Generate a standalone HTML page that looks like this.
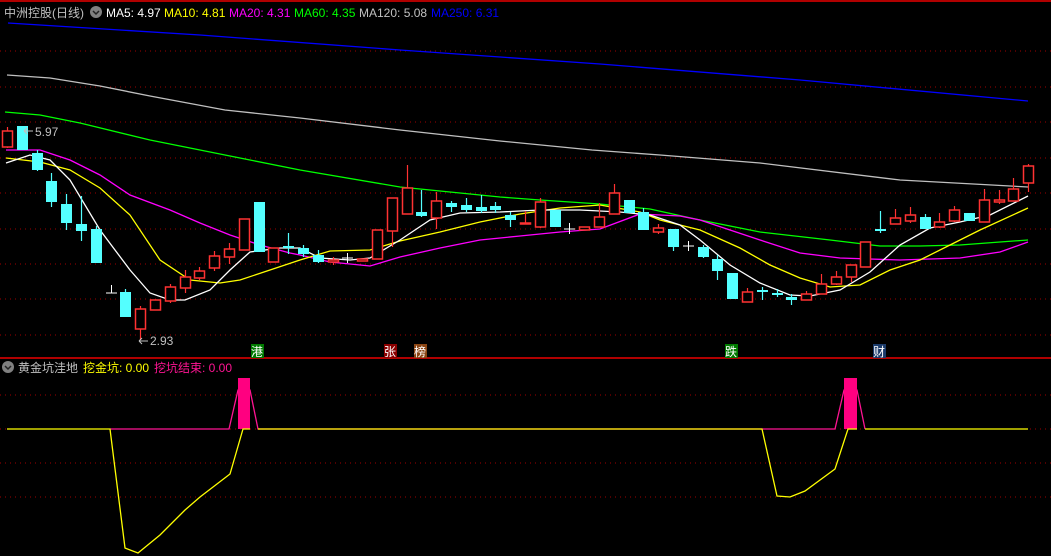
<!DOCTYPE html>
<html><head><meta charset="utf-8"><style>
html,body{margin:0;padding:0;background:#000;width:1051px;height:556px;overflow:hidden}
svg{display:block}
text{font-family:"Liberation Sans","Noto Sans CJK SC",sans-serif;font-size:12px}
.r{stroke:#ff3232;stroke-width:1.2}
.rb{fill:#000;stroke:#ff3232;stroke-width:1.5}
.c{stroke:#54ffff;stroke-width:1.2}
.cb{fill:#54ffff}
.g{stroke:#a00000;stroke-width:1;stroke-dasharray:1 4}
polyline{fill:none;stroke-width:1.3}
</style></head><body>
<svg width="1051" height="556" viewBox="0 0 1051 556">
<line x1="0" y1="1" x2="1051" y2="1" stroke="#b00000" stroke-width="2"/>
<g class="g">
<line x1="0" y1="51" x2="1051" y2="51"/><line x1="0" y1="87" x2="1051" y2="87"/><line x1="0" y1="122" x2="1051" y2="122"/><line x1="0" y1="158" x2="1051" y2="158"/><line x1="0" y1="193" x2="1051" y2="193"/><line x1="0" y1="229" x2="1051" y2="229"/><line x1="0" y1="264" x2="1051" y2="264"/><line x1="0" y1="299" x2="1051" y2="299"/><line x1="0" y1="335" x2="1051" y2="335"/>
<line x1="0" y1="395" x2="1051" y2="395"/><line x1="0" y1="429" x2="1051" y2="429"/><line x1="0" y1="463" x2="1051" y2="463"/><line x1="0" y1="497" x2="1051" y2="497"/>
</g>
<line x1="0" y1="358" x2="1051" y2="358" stroke="#b00000" stroke-width="2"/>

<polyline stroke="#0000ff" points="8,23 200,35 400,50 600,64 800,80 1028,101"/>
<polyline stroke="#c0c0c0" points="7,75 50,78 100,86 150,96 225,110 300,118 400,130 500,141 592,150 660,155 760,163 900,180 1028,187"/>
<polyline stroke="#00ff00" points="5,112 40,115 80,123 150,140 250,160 300,170 400,187 450,192 500,197 540,200 600,204 650,209 700,220 760,232 830,240 880,246 920,246 960,245 1000,242 1028,240"/>
<polyline stroke="#ff00ff" points="6,150 40,150 70,160 100,175 130,195 170,210 200,223 230,235 260,245 290,253 300,255 330,262 370,266 400,257 440,248 480,240 520,236 560,232 600,229 640,214 680,216 700,220 760,240 800,253 840,258 900,260 960,258 1000,252 1028,242"/>
<polyline stroke="#ffff00" points="6,158 40,162 70,170 100,188 130,215 160,260 190,280 220,283 240,280 270,270 300,260 330,251 370,250 400,241 440,232 480,222 520,214 560,208 600,205 640,212 660,220 700,230 740,248 770,265 800,278 830,287 860,285 890,270 920,260 950,245 980,230 1028,208"/>
<polyline stroke="#ffffff" points="6,163 30,155 50,160 70,180 100,230 130,270 150,293 170,300 185,300 210,290 230,270 250,252 280,248 300,248 320,258 350,260 370,258 400,240 430,220 460,213 500,212 540,210 580,210 620,212 650,215 680,225 700,240 730,265 760,283 790,295 810,296 840,290 870,272 900,245 930,228 960,222 990,215 1028,196"/>

<line class="r" x1="7.5" y1="127" x2="7.5" y2="148"/><rect class="rb" x="2.5" y="131" width="10" height="16"/>
<rect class="cb" x="17" y="126" width="11" height="24"/>
<line class="c" x1="37.5" y1="150" x2="37.5" y2="171"/><rect class="cb" x="32" y="153" width="11" height="17"/>
<line class="c" x1="51.5" y1="173" x2="51.5" y2="207"/><rect class="cb" x="46" y="181" width="11" height="21"/>
<line class="c" x1="66.5" y1="194" x2="66.5" y2="230"/><rect class="cb" x="61" y="204" width="11" height="19"/>
<line class="c" x1="81.5" y1="196" x2="81.5" y2="241"/><rect class="cb" x="76" y="224" width="11" height="7"/>
<line class="c" x1="96.5" y1="226" x2="96.5" y2="263"/><rect class="cb" x="91" y="229" width="11" height="34"/>
<line x1="111.5" y1="285" x2="111.5" y2="293" stroke="#fff"/><line x1="106" y1="293" x2="117" y2="293" stroke="#fff"/>
<line class="c" x1="125.5" y1="289" x2="125.5" y2="317"/><rect class="cb" x="120" y="292" width="11" height="25"/>
<line class="r" x1="140.5" y1="306" x2="140.5" y2="340"/><rect class="rb" x="135.5" y="309" width="10" height="20"/>
<rect class="rb" x="150.5" y="300" width="10" height="10"/>
<line class="r" x1="170.5" y1="284" x2="170.5" y2="303"/><rect class="rb" x="165.5" y="287" width="10" height="14"/>
<line class="r" x1="185.5" y1="270" x2="185.5" y2="293"/><rect class="rb" x="180.5" y="277" width="10" height="11"/>
<line class="r" x1="199.5" y1="267" x2="199.5" y2="280"/><rect class="rb" x="194.5" y="271" width="10" height="7"/>
<line class="r" x1="214.5" y1="251" x2="214.5" y2="271"/><rect class="rb" x="209.5" y="256" width="10" height="12"/>
<line class="r" x1="229.5" y1="243" x2="229.5" y2="264"/><rect class="rb" x="224.5" y="249" width="10" height="8"/>
<rect class="rb" x="239.5" y="219" width="10" height="31"/>
<rect class="cb" x="254" y="202" width="11" height="50"/>
<line class="r" x1="273.5" y1="248" x2="273.5" y2="262"/><rect class="rb" x="268.5" y="248" width="10" height="14"/>
<line class="c" x1="288.5" y1="233" x2="288.5" y2="254"/><rect class="cb" x="283" y="246" width="11" height="2"/>
<line class="c" x1="303.5" y1="245" x2="303.5" y2="257"/><rect class="cb" x="298" y="248" width="11" height="6"/>
<line class="c" x1="318.5" y1="250" x2="318.5" y2="263"/><rect class="cb" x="313" y="255" width="11" height="7"/>
<line class="r" x1="333.5" y1="257" x2="333.5" y2="265"/><rect class="rb" x="328.5" y="260" width="10" height="2"/>
<line x1="347.5" y1="253" x2="347.5" y2="263" stroke="#fff"/><line x1="342" y1="258" x2="353" y2="258" stroke="#fff"/>
<rect class="rb" x="357.5" y="259" width="10" height="2"/>
<rect class="rb" x="372.5" y="230" width="10" height="29"/>
<line class="r" x1="392.5" y1="231" x2="392.5" y2="247"/><rect class="rb" x="387.5" y="198" width="10" height="33"/>
<line class="r" x1="407.5" y1="165" x2="407.5" y2="188"/><rect class="rb" x="402.5" y="188" width="10" height="26"/>
<line class="c" x1="421.5" y1="190" x2="421.5" y2="217"/><rect class="cb" x="416" y="212" width="11" height="4"/>
<line class="r" x1="436.5" y1="192" x2="436.5" y2="229"/><rect class="rb" x="431.5" y="201" width="10" height="17"/>
<line class="c" x1="451.5" y1="201" x2="451.5" y2="212"/><rect class="cb" x="446" y="203" width="11" height="4"/>
<line class="c" x1="466.5" y1="198" x2="466.5" y2="212"/><rect class="cb" x="461" y="205" width="11" height="5"/>
<line class="c" x1="481.5" y1="195" x2="481.5" y2="213"/><rect class="cb" x="476" y="207" width="11" height="4"/>
<line class="c" x1="495.5" y1="202" x2="495.5" y2="213"/><rect class="cb" x="490" y="206" width="11" height="4"/>
<line class="c" x1="510.5" y1="212" x2="510.5" y2="227"/><rect class="cb" x="505" y="215" width="11" height="5"/>
<line class="r" x1="525.5" y1="211" x2="525.5" y2="224"/><rect class="rb" x="520.5" y="223" width="10" height="1"/>
<line class="r" x1="540.5" y1="198" x2="540.5" y2="228"/><rect class="rb" x="535.5" y="202" width="10" height="25"/>
<rect class="cb" x="550" y="210" width="11" height="17"/>
<line x1="569.5" y1="223" x2="569.5" y2="234" stroke="#fff"/><line x1="564" y1="229" x2="575" y2="229" stroke="#fff"/>
<rect class="rb" x="579.5" y="227" width="10" height="3"/>
<line class="r" x1="599.5" y1="203" x2="599.5" y2="227"/><rect class="rb" x="594.5" y="217" width="10" height="10"/>
<line class="r" x1="614.5" y1="184" x2="614.5" y2="214"/><rect class="rb" x="609.5" y="193" width="10" height="21"/>
<rect class="cb" x="624" y="200" width="11" height="13"/>
<line class="c" x1="643.5" y1="208" x2="643.5" y2="230"/><rect class="cb" x="638" y="212" width="11" height="18"/>
<line class="r" x1="658.5" y1="224" x2="658.5" y2="234"/><rect class="rb" x="653.5" y="228" width="10" height="4"/>
<line class="c" x1="673.5" y1="229" x2="673.5" y2="251"/><rect class="cb" x="668" y="229" width="11" height="18"/>
<line x1="688.5" y1="241" x2="688.5" y2="251" stroke="#fff"/><line x1="683" y1="246" x2="694" y2="246" stroke="#fff"/>
<line class="c" x1="703.5" y1="245" x2="703.5" y2="258"/><rect class="cb" x="698" y="247" width="11" height="10"/>
<line class="c" x1="717.5" y1="255" x2="717.5" y2="280"/><rect class="cb" x="712" y="259" width="11" height="12"/>
<rect class="cb" x="727" y="273" width="11" height="26"/>
<line class="r" x1="747.5" y1="288" x2="747.5" y2="302"/><rect class="rb" x="742.5" y="292" width="10" height="10"/>
<line class="c" x1="762.5" y1="287" x2="762.5" y2="300"/><rect class="cb" x="757" y="290" width="11" height="2"/>
<line class="c" x1="777.5" y1="289" x2="777.5" y2="297"/><rect class="cb" x="772" y="293" width="11" height="2"/>
<line class="c" x1="791.5" y1="294" x2="791.5" y2="305"/><rect class="cb" x="786" y="297" width="11" height="3"/>
<line class="r" x1="806.5" y1="291" x2="806.5" y2="300"/><rect class="rb" x="801.5" y="294" width="10" height="6"/>
<line class="r" x1="821.5" y1="274" x2="821.5" y2="294"/><rect class="rb" x="816.5" y="284" width="10" height="10"/>
<line class="r" x1="836.5" y1="271" x2="836.5" y2="285"/><rect class="rb" x="831.5" y="277" width="10" height="7"/>
<line class="r" x1="851.5" y1="265" x2="851.5" y2="282"/><rect class="rb" x="846.5" y="265" width="10" height="12"/>
<rect class="rb" x="860.5" y="242" width="10" height="25"/>
<line class="c" x1="880.5" y1="211" x2="880.5" y2="233"/><rect class="cb" x="875" y="229" width="11" height="2"/>
<line class="r" x1="895.5" y1="209" x2="895.5" y2="223"/><rect class="rb" x="890.5" y="218" width="10" height="6"/>
<line class="r" x1="910.5" y1="207" x2="910.5" y2="223"/><rect class="rb" x="905.5" y="215" width="10" height="6"/>
<line class="c" x1="925.5" y1="214" x2="925.5" y2="229"/><rect class="cb" x="920" y="217" width="11" height="12"/>
<line class="r" x1="939.5" y1="213" x2="939.5" y2="228"/><rect class="rb" x="934.5" y="222" width="10" height="5"/>
<line class="r" x1="954.5" y1="206" x2="954.5" y2="222"/><rect class="rb" x="949.5" y="210" width="10" height="11"/>
<rect class="cb" x="964" y="213" width="11" height="8"/>
<line class="r" x1="984.5" y1="189" x2="984.5" y2="222"/><rect class="rb" x="979.5" y="200" width="10" height="22"/>
<line class="r" x1="999.5" y1="190" x2="999.5" y2="204"/><rect class="rb" x="994.5" y="200" width="10" height="2"/>
<line class="r" x1="1013.5" y1="178" x2="1013.5" y2="201"/><rect class="rb" x="1008.5" y="189" width="10" height="12"/>
<line class="r" x1="1028.5" y1="164" x2="1028.5" y2="192"/><rect class="rb" x="1023.5" y="166" width="10" height="17"/>

<path d="M24 131 H33 M24 131 L27 128 M24 131 L27 134" stroke="#c0c0c0" stroke-width="1" fill="none"/>
<text x="35" y="136" fill="#c0c0c0">5.97</text>
<path d="M139 341 H148 M139 341 L142 338 M139 341 L142 344" stroke="#c0c0c0" stroke-width="1" fill="none"/>
<text x="150" y="345" fill="#c0c0c0">2.93</text>

<rect x="251" y="344" width="13" height="14" fill="#007a00"/><text x="251" y="356" fill="#fff">港</text>
<rect x="384" y="344" width="13" height="14" fill="#8b0000"/><text x="384" y="356" fill="#fff">张</text>
<rect x="414" y="344" width="13" height="14" fill="#8b4513"/><text x="414" y="356" fill="#fff">榜</text>
<rect x="725" y="344" width="13" height="14" fill="#007a00"/><text x="725" y="356" fill="#fff">跌</text>
<rect x="873" y="344" width="13" height="14" fill="#1a3a6a"/><text x="873" y="356" fill="#fff">财</text>

<text x="4" y="17" fill="#c0c0c0">中洲控股(日线)</text>
<circle cx="96" cy="12" r="6" fill="#808080"/><path d="M93 11 L96 14 L99 11" stroke="#222" stroke-width="1.5" fill="none"/>
<text x="106" y="17" fill="#fff">MA5: 4.97</text>
<text x="164" y="17" fill="#ffff00">MA10: 4.81</text>
<text x="229" y="17" fill="#ff00ff">MA20: 4.31</text>
<text x="294" y="17" fill="#00ff00">MA60: 4.35</text>
<text x="359" y="17" fill="#c0c0c0">MA120: 5.08</text>
<text x="431" y="17" fill="#0000ff">MA250: 6.31</text>

<circle cx="8" cy="367" r="6" fill="#808080"/><path d="M5 366 L8 369 L11 366" stroke="#222" stroke-width="1.5" fill="none"/>
<text x="18" y="372" fill="#c0c0c0">黄金坑洼地</text>
<text x="83" y="372" fill="#ffff00">挖金坑: 0.00</text>
<text x="154" y="372" fill="#ff1493">挖坑结束: 0.00</text>

<polyline stroke="#ff1493" stroke-width="1" points="110,429 229,429 238,390 250,390 258,429 762,429"/>
<polyline stroke="#ff1493" stroke-width="1" points="762,429 835,429 844,390 857,390 865,429"/>
<rect x="238" y="378" width="12" height="51" fill="#ff0080"/>
<rect x="844" y="378" width="13" height="51" fill="#ff0080"/>
<polyline stroke="#ffff00" stroke-width="2" points="7,429 110,429 125,548 138,553 160,535 185,510 200,497 230,474 243,429 250,429"/>
<polyline stroke="#ffff00" stroke-width="2" points="258,429 762,429 777,496 790,497 805,491 835,469 848,429 857,429"/>
<polyline stroke="#ffff00" stroke-width="2" points="865,429 1028,429"/>
</svg>
</body></html>
